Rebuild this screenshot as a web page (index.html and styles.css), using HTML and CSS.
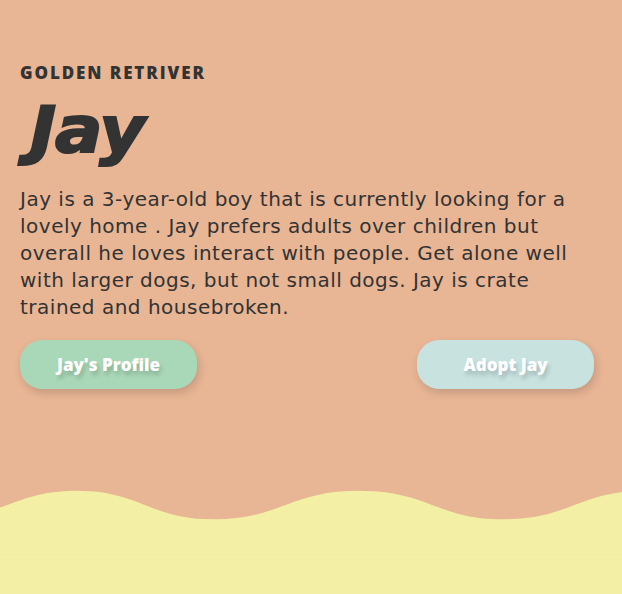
FILE: index.html
```html
<!DOCTYPE html>
<html lang="en">
<head>
<meta charset="utf-8">
<title>Jay</title>
<link rel="stylesheet" href="styles.css">
</head>
<body>
<div class="page">
  <section class="intro">
    <h4 class="breed">GOLDEN RETRIVER</h4>
    <h1 class="name">Jay</h1>
    <p class="desc">Jay is a 3-year-old boy that is currently looking for a lovely home . Jay prefers adults over children but overall he loves interact with people. Get alone well with larger dogs, but not small dogs. Jay is crate trained and housebroken.</p>
    <div class="actions">
      <button class="btn btn-profile">Jay's Profile</button>
      <button class="btn btn-adopt">Adopt Jay</button>
    </div>
  </section>
  <svg class="wave" viewBox="0 0 622 70" preserveAspectRatio="none" aria-hidden="true">
    <path d="M-63,32.3 C0,32.3 14,3.7 77,3.7 C140,3.7 150,32.3 213,32.3 C280,32.3 291,3.7 358,3.7 C430,3.7 436,32.3 503,32.3 C570,32.3 580,3.7 645,3.7 L645,70 L-63,70 Z" fill="#f3efa5"/>
  </svg>
  <footer class="ground"></footer>
</div>
</body>
</html>
```
FILE: styles.css
```css
* { box-sizing: border-box; }
html, body { margin: 0; padding: 0; }
body {
  background: #e8b595;
  font-family: "DejaVu Sans", "Noto Sans", sans-serif;
  color: #333333;
}
.page {
  display: flex;
  flex-direction: column;
  height: 594px;
  overflow: hidden;
}
.intro {
  flex: 1;
  padding: 62px 20px 0 20px;
}
.breed {
  margin: 0;
  font-family: "Open Sans", sans-serif;
  font-size: 17px;
  font-weight: 800;
  letter-spacing: 1.9px;
  line-height: 22px;
}
.name {
  margin: 6px 0 0 0;
  padding-left: 9px;
  font-family: "DejaVu Sans", sans-serif;
  font-size: 64px;
  font-weight: 700;
  font-style: italic;
  line-height: 80px;
  letter-spacing: -1px;
  -webkit-text-stroke: 2px #333333;
  transform: scaleX(1.1);
  transform-origin: left center;
}
.desc {
  margin: 16px 0 0 0;
  font-size: 20px;
  line-height: 27px;
  letter-spacing: 0.5px;
  max-width: 582px;
}
.actions {
  display: flex;
  justify-content: space-between;
  margin: 19px 8px 0 0;
}
.btn {
  width: 177px;
  height: 49px;
  border: none;
  border-radius: 22px;
  color: #ffffff;
  font-family: "Open Sans", sans-serif;
  font-weight: 800;
  font-size: 17px;
  letter-spacing: 0;
  text-shadow: 2px 4px 4px rgba(0, 0, 0, 0.18);
  box-shadow: 2px 4px 8px rgba(0, 0, 0, 0.15);
}
.btn-profile { background: #a9d8b8; }
.btn-adopt { background: #c8e2df; }
.wave {
  display: block;
  width: 622px;
  height: 70px;
  flex: none;
}
.ground {
  flex: none;
  height: 37px;
  background: #f3efa5;
  border-top: 1px solid #f5f2ae;
}
```
